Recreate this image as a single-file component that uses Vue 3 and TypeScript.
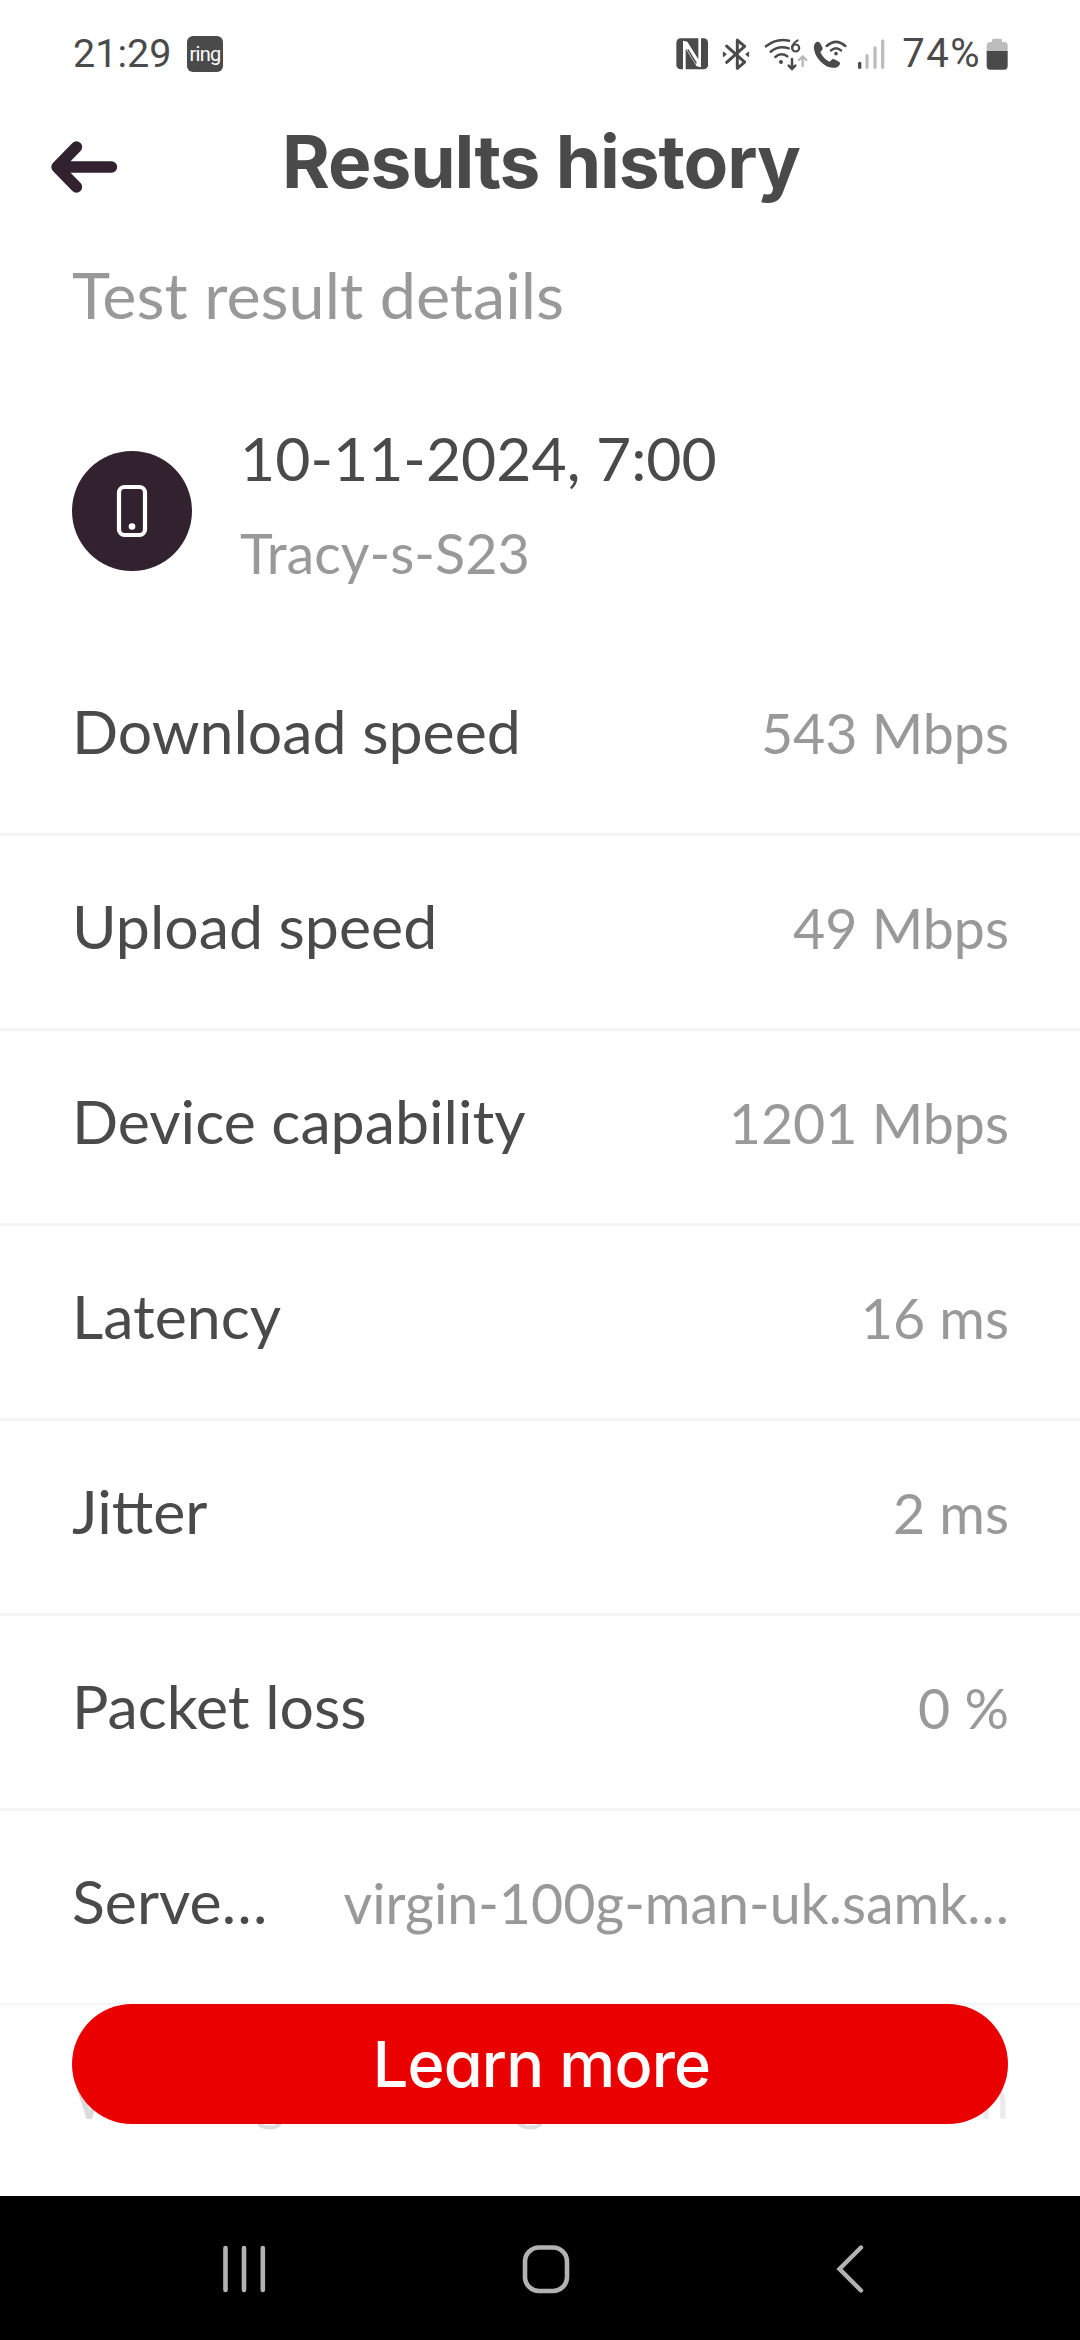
<script setup lang="ts">
interface Row {
  label: string
  value: string
}

const rows: Row[] = [
  { label: 'Download speed', value: '543 Mbps' },
  { label: 'Upload speed', value: '49 Mbps' },
  { label: 'Device capability', value: '1201 Mbps' },
  { label: 'Latency', value: '16 ms' },
  { label: 'Jitter', value: '2 ms' },
  { label: 'Packet loss', value: '0 %' },
  { label: 'Serve…', value: 'virgin-100g-man-uk.samk…' },
  { label: 'WiFi signal strength', value: '-50 dBm' },
]
</script>

<template>
  <div class="screen">
    <header class="status">
      <span class="clock">21:29</span>
      <span class="ring"><span>ring</span></span>
      <div class="status-icons">
        <svg class="nfc" viewBox="46 54 98 96" width="32.7" height="32">
          <rect x="47" y="55" width="95" height="93" rx="13" fill="#4a4a4a" />
          <path d="M67 150V62L80 65L113 118V53H121V142L108 139L75 86V150Z" fill="#fff" />
          <path d="M81 88L107 130" stroke="#4a4a4a" stroke-width="4.5" />
        </svg>
        <svg class="bt" viewBox="186 53 84 98" width="28" height="32.7">
          <path d="M200 77L254 125L232 144V59L254 78L200 126" fill="none" stroke="#4a4a4a" stroke-width="9" stroke-linejoin="round" stroke-linecap="round" />
          <path d="M190 95L199 102L190 109ZM266 95L257 102L266 109Z" fill="#4a4a4a" stroke="#4a4a4a" stroke-width="3" stroke-linejoin="round" />
        </svg>
        <svg class="wifi" viewBox="312 53 132 99" width="44" height="33">
          <g fill="none" stroke="#4a4a4a" stroke-width="7.5" stroke-linecap="round">
            <path d="M318 78Q348 53 387 61" />
            <path d="M332 94Q356 74 386 84" />
            <path d="M346 110Q363 95 382 108" />
            <path d="M396 116V144M386 136L396 146L406 136" />
            <path d="M413 60Q396 70 396 83" stroke-width="6.5" />
            <circle cx="407" cy="83" r="10.5" stroke-width="6.5" />
          </g>
          <circle cx="363" cy="125" r="6" fill="#4a4a4a" />
          <path d="M428 137V110M417 119L428 108L439 119" fill="none" stroke="#b8b8b8" stroke-width="7" stroke-linecap="round" />
        </svg>
        <svg class="call" viewBox="460 55 102 89" width="34" height="29.7">
          <path d="M467 67Q461 73 463 86Q468 113 491 130Q509 144 528 141Q535 139 540 132Q544 127 538 123L524 116Q519 113 515 118L510 123Q491 115 482 94L487 89Q491 85 488 80L481 67Q475 60 467 67Z" fill="#4a4a4a" />
          <g fill="none" stroke="#4a4a4a" stroke-width="7.5" stroke-linecap="round">
            <path d="M501 76Q529 51 557 76" />
            <path d="M514 89Q529 76 544 89" />
          </g>
          <circle cx="529" cy="99" r="5.5" fill="#4a4a4a" />
        </svg>
        <svg class="signal" viewBox="592 55 86 91" width="28.7" height="30.3">
          <g stroke-width="10" stroke-linecap="round">
            <path d="M600 128V140" stroke="#4a4a4a" />
            <path d="M622 105V140M646 82V140M669 61V140" stroke="#bdbdbd" />
          </g>
        </svg>
        <span class="percent">74%</span>
        <svg class="battery" viewBox="976 52 68 98" width="22.7" height="32.7">
          <path d="M978 92V75Q978 64 989 64H994V59Q994 54 999 54H1019Q1024 54 1024 59V64H1030Q1041 64 1041 75V92Z" fill="#bdbdbd" />
          <path d="M978 91H1041V136Q1041 147 1030 147H989Q978 147 978 136Z" fill="#4a4a4a" />
        </svg>
      </div>
    </header>

    <div class="titlebar">
      <svg class="back" viewBox="0 0 68 54" width="68" height="54">
        <path d="M26.5 7L7 27L26.5 47M8 27H61.5" fill="none" stroke="#32222f" stroke-width="11.4" stroke-linecap="round" stroke-linejoin="round" />
        <path d="M7 27L20 15V39Z" fill="#32222f" />
      </svg>
      <h1>Results history</h1>
    </div>

    <main>
      <h2>Test result details</h2>
      <section class="device">
        <div class="avatar">
          <svg viewBox="0 0 32 54" width="32" height="54">
            <rect x="3" y="3" width="26" height="48" rx="5.5" fill="none" stroke="#fff" stroke-width="4.2" />
            <circle cx="16" cy="42.5" r="3.3" fill="#fff" />
          </svg>
        </div>
        <div class="device-text">
          <p class="date">10-11-2024, 7:00</p>
          <p class="name">Tracy-s-S23</p>
        </div>
      </section>
      <ul class="rows">
        <li v-for="row in rows" :key="row.label">
          <span class="label">{{ row.label }}</span>
          <span class="value">{{ row.value }}</span>
        </li>
      </ul>
    </main>

    <div class="cta">
      <button type="button">Learn more</button>
    </div>

    <nav>
      <svg class="recents" viewBox="0 0 48 52" width="48" height="52">
        <path d="M5.5 5V47M24 5V47M42.8 5V47" stroke="#b2b2b2" stroke-width="4.6" stroke-linecap="round" />
      </svg>
      <svg class="home" viewBox="0 0 50 52" width="50" height="52">
        <rect x="4" y="4.5" width="42" height="43.5" rx="14" fill="none" stroke="#b2b2b2" stroke-width="4.6" />
      </svg>
      <svg class="previous" viewBox="0 0 30 52" width="30" height="52">
        <path d="M26 4.5L4.5 26L26 47.5" fill="none" stroke="#b2b2b2" stroke-width="4.4" stroke-linecap="round" />
      </svg>
    </nav>
  </div>
</template>

<style>
body {
  margin: 0;
  background: #fff;
}
</style>

<style scoped>
.screen {
  position: relative;
  display: flex;
  flex-direction: column;
  width: 1080px;
  height: 2340px;
  overflow: hidden;
  background: #fff;
  color: #4a4a4a;
  font-family: Lato, sans-serif;
}
svg {
  display: block;
  flex: none;
}
h1, h2, p, ul {
  margin: 0;
  padding: 0;
  font-weight: 400;
}
.status {
  display: flex;
  align-items: center;
  flex: none;
  height: 108px;
  padding: 0 71px 0 73px;
  box-sizing: border-box;
  font-family: Roboto, sans-serif;
}
.clock {
  width: 98px;
  font-size: 39.5px;
  line-height: 46px;
  white-space: nowrap;
}
.ring {
  display: flex;
  align-items: center;
  justify-content: center;
  width: 36px;
  height: 36px;
  margin-left: 16px;
  border-radius: 6px;
  background: #4a4a4a;
  color: #fff;
  font-size: 20px;
  line-height: 24px;
  letter-spacing: -0.7px;
}
.status-icons {
  display: flex;
  align-items: center;
  margin-left: auto;
}
.bt { margin-left: 14px; }
.wifi { margin-left: 14px; }
.call { margin-left: 5px; }
.signal { margin-left: 10px; }
.percent {
  width: 80px;
  margin-left: 16.3px;
  font-size: 40px;
  line-height: 46px;
  letter-spacing: 1.5px;
}
.battery { margin-left: 4px; }
.titlebar {
  display: flex;
  align-items: center;
  flex: none;
  height: 117px;
  padding-left: 50px;
}
.titlebar h1 {
  width: 846px;
  padding-bottom: 9px;
  text-align: center;
  font-family: Inter, sans-serif;
  font-weight: 700;
  font-size: 73px;
  line-height: 90px;
  letter-spacing: -1.05px;
}
main {
  flex: 1;
  min-height: 0;
  overflow: hidden;
}
h2 {
  padding: 32px 72px 0;
  color: #999;
  font-size: 64.7px;
  line-height: 74px;
}
.device {
  display: flex;
  height: 310px;
  padding: 90px 72px 0;
  box-sizing: border-box;
}
.avatar {
  display: flex;
  align-items: center;
  justify-content: center;
  width: 120px;
  height: 120px;
  margin-top: 30px;
  border-radius: 50%;
  background: #32222f;
}
.device-text {
  margin: 1px 0 0 48px;
}
.date {
  font-size: 60.7px;
  line-height: 72px;
}
.name {
  margin-top: 25px;
  color: #999;
  font-size: 55.7px;
  line-height: 68px;
}
.rows {
  list-style: none;
}
.rows li {
  display: flex;
  align-items: baseline;
  justify-content: space-between;
  height: 195px;
  padding: 54px 71px 0 72px;
  box-sizing: border-box;
  border-bottom: 3px solid #f4f4f4;
  white-space: nowrap;
}
.label {
  font-size: 60.8px;
  line-height: 72px;
}
.value {
  color: #999;
  font-size: 55.5px;
  line-height: 68px;
}
.cta {
  position: absolute;
  left: 0;
  right: 0;
  top: 2004px;
  height: 192px;
  padding: 0 72px;
  box-sizing: border-box;
  background: linear-gradient(rgba(255, 255, 255, 0.4), rgba(255, 255, 255, 0.8) 50%, rgba(255, 255, 255, 0.85));
}
button {
  display: block;
  width: 936px;
  height: 120px;
  padding: 0 0 0 3px;
  border: 0;
  border-radius: 60px;
  background: #eb0000;
  color: #fff;
  font-family: Inter, sans-serif;
  font-weight: 500;
  font-size: 63px;
  line-height: 120px;
  letter-spacing: -0.8px;
  font-feature-settings: 'cv11';
}
nav {
  display: flex;
  align-items: center;
  flex: none;
  height: 144px;
  padding: 2px 0 0 220px;
  box-sizing: border-box;
  background: #000;
}
.home { margin-left: 253px; }
.previous { margin-left: 264px; }
</style>
